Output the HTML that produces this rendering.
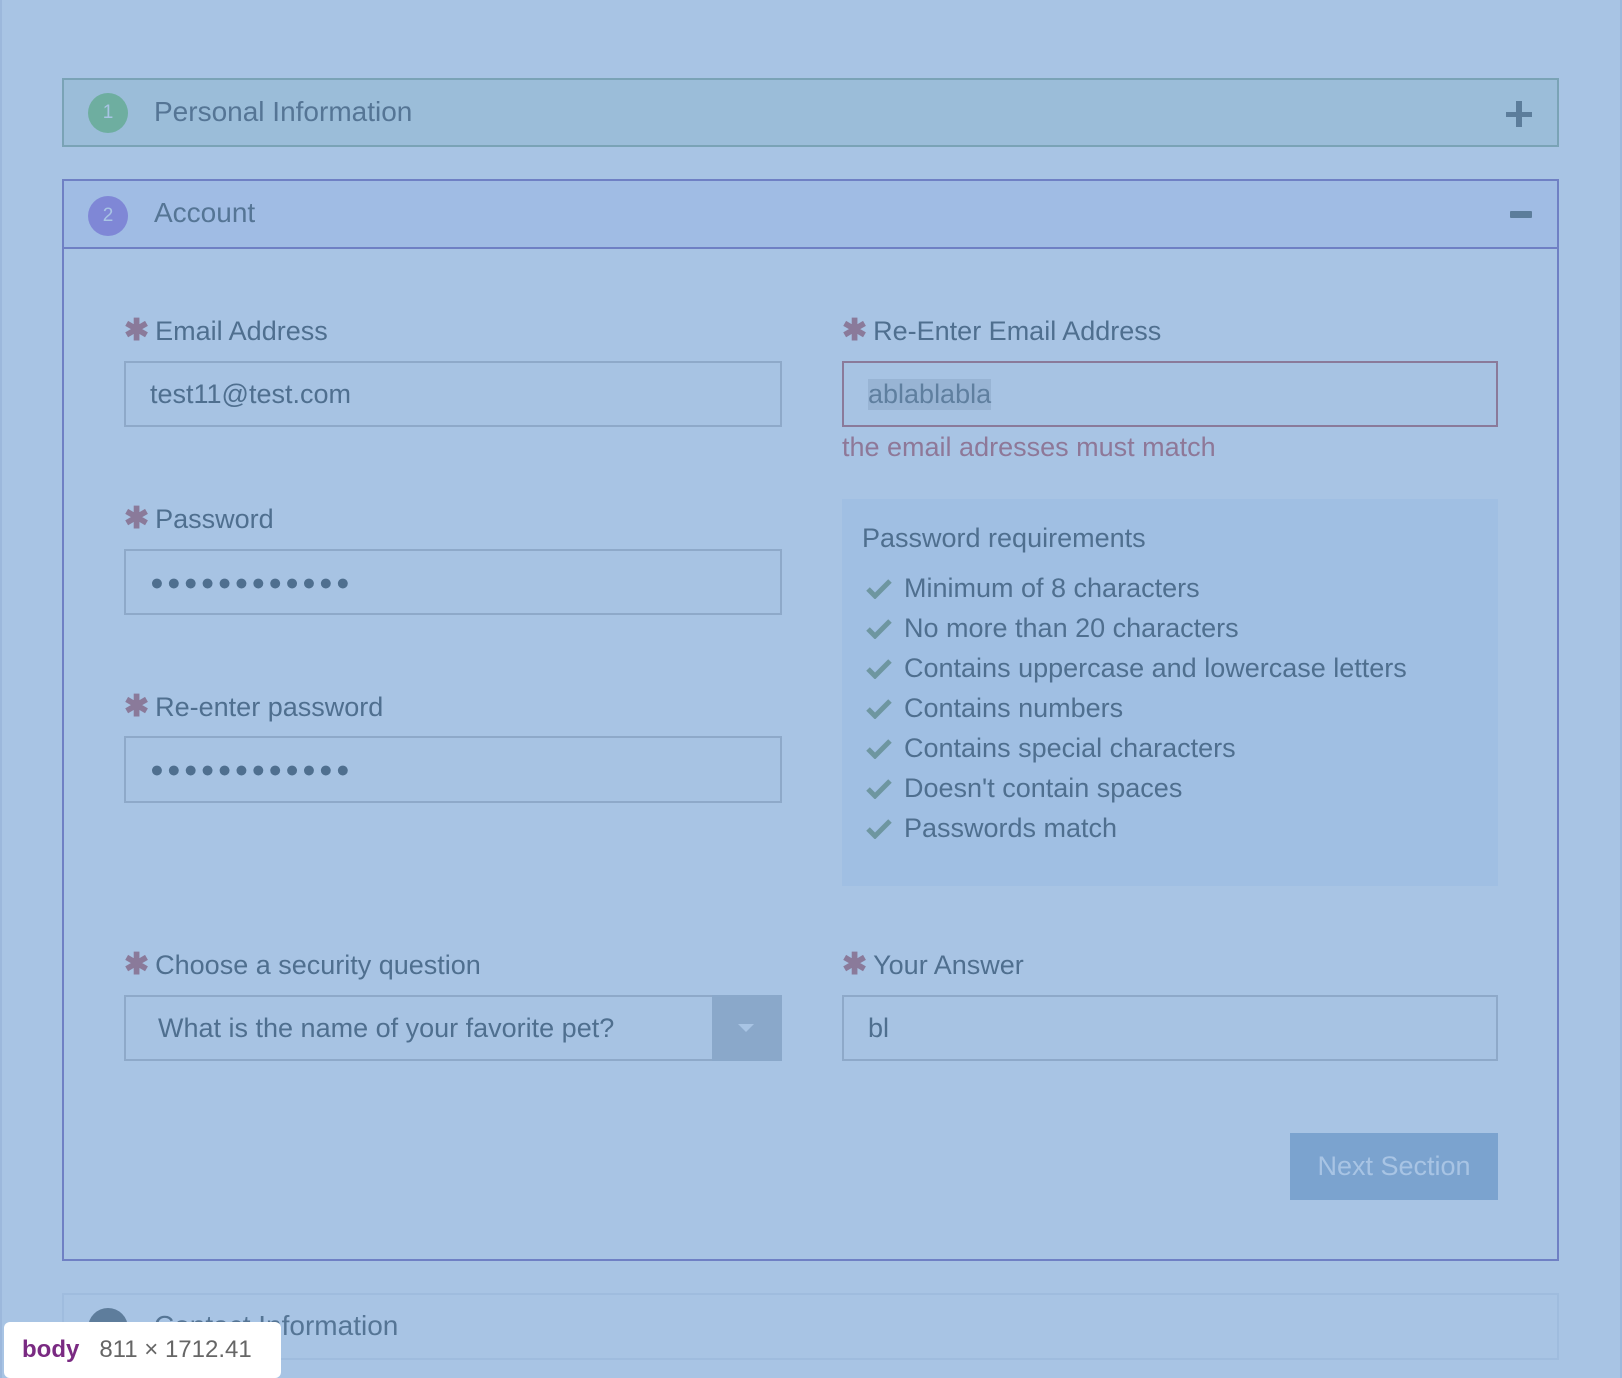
<!DOCTYPE html>
<html><head><meta charset="utf-8"><style>
*{box-sizing:border-box;margin:0;padding:0}
body{width:1622px;height:1378px;overflow:hidden;background:#a8c4e4;font-family:"Liberation Sans",sans-serif;color:#4f6f8f;position:relative;box-shadow:inset 2px 0 0 #9cb8dc,inset -2px 0 0 #9cb8dc}
.a{position:absolute}
.circ{position:absolute;width:40px;height:40px;border-radius:50%;color:#a8c4e4;font-size:19px;text-align:center;line-height:40px}
.title{position:absolute;font-size:28px;color:#557595}
.lbl{position:absolute;font-size:27px;color:#4f6f8f}
.lbl b{color:#8a7a9a;font-weight:bold;margin-right:6px;font-size:30px}
.inp{position:absolute;border:2px solid #8ea9c9;background:#a7c3e3;font-size:27px;padding-left:24px;display:flex;align-items:center;color:#4f6f8f}
.dots{letter-spacing:3px;font-size:23px}
.req li{list-style:none;height:40px;font-size:27px;display:flex;align-items:center}
.req li svg{margin-right:12px;margin-left:4px}
</style></head><body>
<div class="a" style="left:62px;top:78px;width:1497px;height:69px;background:#9bbdd9;border:2px solid #7aa3b6"></div>
<div class="circ" style="left:88px;top:93px;background:#6eaea0">1</div>
<div class="title" style="left:154px;top:96px">Personal Information</div>
<div class="a" style="left:1506px;top:112px;width:26px;height:5px;background:#5c7d9b"></div>
<div class="a" style="left:1516px;top:101px;width:6px;height:26px;background:#5c7d9b"></div>

<div class="a" style="left:62px;top:179px;width:1497px;height:1082px;border:2px solid #6f80c4"></div>
<div class="a" style="left:64px;top:181px;width:1493px;height:68px;background:#a0bce4;border-bottom:2px solid #6f80c4"></div>
<div class="circ" style="left:88px;top:196px;background:#7f87d6">2</div>
<div class="title" style="left:154px;top:197px">Account</div>
<div class="a" style="left:1510px;top:211px;width:22px;height:7px;background:#5c7d9b;border-radius:1px"></div>

<div class="lbl" style="left:124px;top:313px"><b>✱</b>Email Address</div>
<div class="inp" style="left:124px;top:361px;width:658px;height:66px">test11@test.com</div>
<div class="lbl" style="left:842px;top:313px"><b>✱</b>Re-Enter Email Address</div>
<div class="inp" style="left:842px;top:361px;width:656px;height:66px;border-color:#8a7a9a"><span style="background:#98b4d4;color:#5f7f9f">ablablabla</span></div>
<div class="a" style="left:842px;top:432px;font-size:27px;color:#8e7898">the email adresses must match</div>

<div class="lbl" style="left:124px;top:501px"><b>✱</b>Password</div>
<div class="inp dots" style="left:124px;top:549px;width:658px;height:66px">●●●●●●●●●●●●</div>
<div class="lbl" style="left:124px;top:689px"><b>✱</b>Re-enter password</div>
<div class="inp dots" style="left:124px;top:736px;width:658px;height:67px">●●●●●●●●●●●●</div>

<div class="a req" style="left:842px;top:499px;width:656px;height:387px;background:#a0bfe3;padding:24px 20px">
<div style="font-size:27px;margin-bottom:14px">Password requirements</div>
<ul>
<li><svg width="26" height="22" viewBox="0 0 26 22"><path d="M2 12l7 7L24 4" stroke="#6e96a0" stroke-width="5" fill="none"/></svg>Minimum of 8 characters</li>
<li><svg width="26" height="22" viewBox="0 0 26 22"><path d="M2 12l7 7L24 4" stroke="#6e96a0" stroke-width="5" fill="none"/></svg>No more than 20 characters</li>
<li><svg width="26" height="22" viewBox="0 0 26 22"><path d="M2 12l7 7L24 4" stroke="#6e96a0" stroke-width="5" fill="none"/></svg>Contains uppercase and lowercase letters</li>
<li><svg width="26" height="22" viewBox="0 0 26 22"><path d="M2 12l7 7L24 4" stroke="#6e96a0" stroke-width="5" fill="none"/></svg>Contains numbers</li>
<li><svg width="26" height="22" viewBox="0 0 26 22"><path d="M2 12l7 7L24 4" stroke="#6e96a0" stroke-width="5" fill="none"/></svg>Contains special characters</li>
<li><svg width="26" height="22" viewBox="0 0 26 22"><path d="M2 12l7 7L24 4" stroke="#6e96a0" stroke-width="5" fill="none"/></svg>Doesn't contain spaces</li>
<li><svg width="26" height="22" viewBox="0 0 26 22"><path d="M2 12l7 7L24 4" stroke="#6e96a0" stroke-width="5" fill="none"/></svg>Passwords match</li>
</ul></div>

<div class="lbl" style="left:124px;top:947px"><b>✱</b>Choose a security question</div>
<div class="inp" style="left:124px;top:995px;width:658px;height:66px;padding-left:32px">What is the name of your favorite pet?</div>
<div class="a" style="left:712px;top:995px;width:70px;height:66px;background:#8aa8ca"></div>
<div class="a" style="left:738px;top:1024px;width:0;height:0;border-left:8px solid transparent;border-right:8px solid transparent;border-top:8px solid #a8c4e4"></div>
<div class="lbl" style="left:842px;top:947px"><b>✱</b>Your Answer</div>
<div class="inp" style="left:842px;top:995px;width:656px;height:66px">bl</div>

<div class="a" style="left:1290px;top:1133px;width:208px;height:67px;background:#7ba3cf;color:#a8c4e4;font-size:27px;display:flex;align-items:center;justify-content:center">Next Section</div>

<div class="a" style="left:62px;top:1293px;width:1497px;height:67px;border:2px solid #9fbcde"></div>
<div class="circ" style="left:88px;top:1308px;background:#5e7d9c"></div>
<div class="title" style="left:154px;top:1310px">Contact Information</div>
<div class="a" style="left:4px;top:1322px;width:277px;height:56px;background:#fff;border-radius:6px;font-size:24px;display:flex;align-items:center;padding-left:18px;color:#666"><b style="color:#7a2a82;margin-right:20px">body</b>811 × 1712.41</div>
</body></html>
